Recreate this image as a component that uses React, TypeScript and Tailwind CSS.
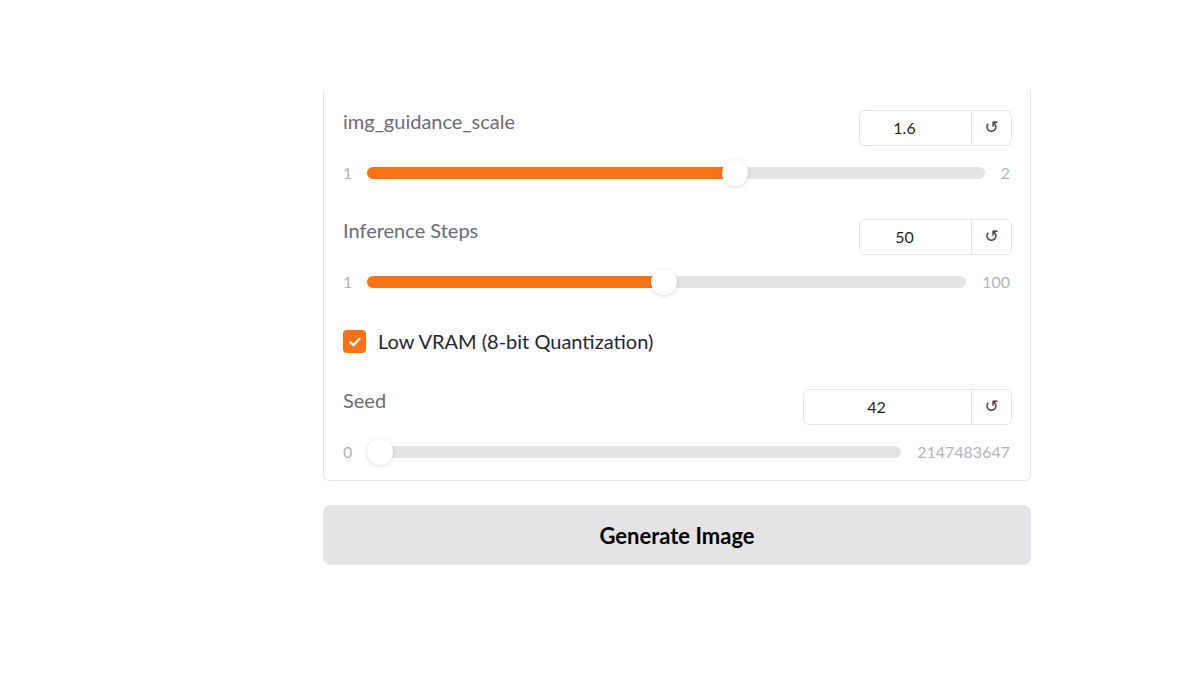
import React from 'react';

type SliderProps = {
  label: string;
  value: string;
  min: number;
  max: number;
  num: number;
  boxWidth: string;
};

const Slider = ({ label, value, min, max, num, boxWidth }: SliderProps) => {
  const pct = (num - min) / (max - min);
  // thumb stays inside the track, fill runs to its centre
  const thumbLeft = `calc(${pct} * (100% - 26px))`;
  const fillWidth = `calc(${pct} * (100% - 26px) + 13px)`;

  return (
    <div>
      <div className="flex items-start justify-between">
        <span className="text-[20px] leading-[22px] text-[#6b6b76]">{label}</span>
        <div className={`flex h-[36px] ${boxWidth} rounded-[6px] border border-[#e4e4e7] bg-white`}>
          <div className="flex flex-1 items-center justify-center pr-[22px] text-[16px] text-[#1f1f23]">{value}</div>
          <div className="flex w-[40px] items-center justify-center border-l border-[#e4e4e7] text-[17px] text-[#3f3f46] font-['DejaVu_Sans',sans-serif]">
            ↺
          </div>
        </div>
      </div>
      <div className="mt-[14px] flex h-[26px] items-center gap-[14px]">
        <span className="w-[10px] text-left text-[16px] text-[#b4b4bc]">{min}</span>
        <div className="relative h-[12px] flex-1 rounded-full bg-[#e4e4e7]">
          <div className="absolute left-0 top-0 h-full rounded-full bg-[#f97316]" style={{ width: fillWidth }} />
          <div
            className="absolute top-1/2 h-[26px] w-[26px] -translate-y-1/2 rounded-full bg-white shadow-[0_1px_4px_rgba(0,0,0,0.15)]"
            style={{ left: thumbLeft }}
          />
        </div>
        <span className="pl-[2px] pr-[2px] text-[16px] text-[#b4b4bc]">{max}</span>
      </div>
    </div>
  );
};

const App = () => {
  return (
    <div className="min-h-[676px] w-[1200px] bg-white font-['Lato',sans-serif]">
      <div className="pl-[323px] pt-[90px]">
        <div className="w-[708px] rounded-b-[6px] border border-t-0 border-[#e4e4e7] pl-[19px] pr-[18px] pb-[15px] pt-[20px]">
          <Slider label="img_guidance_scale" value="1.6" min={1} max={2} num={1.6} boxWidth="w-[153px]" />
          <div className="mt-[33px]">
            <Slider label="Inference Steps" value="50" min={1} max={100} num={50} boxWidth="w-[153px]" />
          </div>
          <label className="mt-[35px] flex h-[23px] items-center gap-[12px]">
            <span className="flex h-[23px] w-[23px] items-center justify-center rounded-[4px] bg-[#f97316]">
              <svg width="14" height="14" viewBox="0 0 14 14" fill="none">
                <path d="M2.5 7.3 L5.6 10.2 L11.5 3.8" stroke="white" strokeWidth="2.4" strokeLinecap="round" strokeLinejoin="round" />
              </svg>
            </span>
            <span className="text-[20px] leading-[23px] text-[#27272a]">Low VRAM (8-bit Quantization)</span>
          </label>
          <div className="mt-[36px]">
            <Slider label="Seed" value="42" min={0} max={2147483647} num={0} boxWidth="w-[209px]" />
          </div>
        </div>
        <button className="mt-[24px] flex h-[60px] w-[708px] items-center justify-center rounded-[8px] bg-[#e4e4e7] text-[22px] font-bold text-black">
          Generate Image
        </button>
      </div>
    </div>
  );
};

export default App;
